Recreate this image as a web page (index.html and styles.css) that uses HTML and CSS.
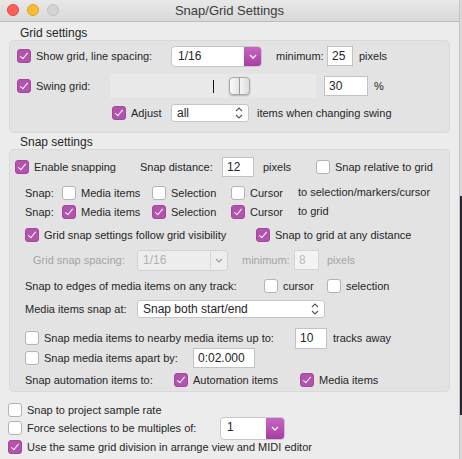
FILE: index.html
```html
<!DOCTYPE html>
<html lang="en">
<head>
  <meta charset="UTF-8" />
  <title>Snap/Grid Settings</title>
  <link rel="stylesheet" href="styles.css">
</head>
<body>
  <div class="window">
    <div class="titlebar">
      <div class="lights">
        <span class="light red"></span>
        <span class="light yellow"></span>
        <span class="light off"></span>
      </div>
      <div class="title">Snap/Grid Settings</div>
    </div>

    <div class="section-title">Grid settings</div>
    <div class="group grid-group">
      <div class="row g1">
        <label class="opt w-show"><span class="cb on"></span>Show grid, line spacing:</label>
        <div class="popup w-spacing">
          <span class="popup-text">1/16</span>
          <span class="popup-btn"><svg width="8" height="5" viewBox="0 0 8 5"><path d="M1 1 L4 4 L7 1" fill="none" stroke="#fff" stroke-width="1.3"/></svg></span>
        </div>
        <span class="lbl w-min">minimum:</span>
        <div class="field w-25">25</div>
        <span class="lbl ml6">pixels</span>
      </div>
      <div class="row g2">
        <label class="opt w-swing"><span class="cb on"></span>Swing grid:</label>
        <div class="slider">
          <span class="tick"></span>
          <span class="thumb"></span>
        </div>
        <div class="field w-30">30</div>
        <span class="lbl ml6">%</span>
      </div>
      <div class="row g3">
        <label class="opt w-adjust"><span class="cb on"></span>Adjust</label>
        <div class="select w-all">
          <span class="popup-text">all</span>
          <svg class="updown" width="8" height="12" viewBox="0 0 8 12"><path d="M1 4 L4 1 L7 4 M1 8 L4 11 L7 8" fill="none" stroke="#555" stroke-width="1.1"/></svg>
        </div>
        <span class="lbl ml8">items when changing swing</span>
      </div>
    </div>

    <div class="section-title snap-title">Snap settings</div>
    <div class="group snap-group">
      <div class="row sA">
        <label class="opt w-enable"><span class="cb on"></span>Enable snapping</label>
        <span class="lbl w-dist">Snap distance:</span>
        <div class="field w-12">12</div>
        <span class="lbl w-px">pixels</span>
        <label class="opt"><span class="cb"></span>Snap relative to grid</label>
      </div>
      <div class="row sB">
        <span class="lbl w-snap">Snap:</span>
        <label class="opt w-media"><span class="cb"></span>Media items</label>
        <label class="opt w-sel"><span class="cb"></span>Selection</label>
        <label class="opt w-cur"><span class="cb"></span>Cursor</label>
        <span class="lbl raise">to selection/markers/cursor</span>
      </div>
      <div class="row sC">
        <span class="lbl w-snap">Snap:</span>
        <label class="opt w-media"><span class="cb on"></span>Media items</label>
        <label class="opt w-sel"><span class="cb on"></span>Selection</label>
        <label class="opt w-cur"><span class="cb on"></span>Cursor</label>
        <span class="lbl raise">to grid</span>
      </div>
      <div class="row sD">
        <label class="opt w-follow"><span class="cb on"></span>Grid snap settings follow grid visibility</label>
        <label class="opt"><span class="cb on"></span>Snap to grid at any distance</label>
      </div>
      <div class="row sE disabled">
        <span class="lbl w-gss">Grid snap spacing:</span>
        <div class="select dim w-gsel">
          <span class="popup-text">1/16</span>
          <span class="dim-btn"><svg width="8" height="5" viewBox="0 0 8 5"><path d="M1 1 L4 4 L7 1" fill="none" stroke="#9a9a9a" stroke-width="1.1"/></svg></span>
        </div>
        <span class="lbl w-min2">minimum:</span>
        <div class="field dim w-8">8</div>
        <span class="lbl ml8">pixels</span>
      </div>
      <div class="row sF">
        <span class="lbl w-edges">Snap to edges of media items on any track:</span>
        <label class="opt w-cursor"><span class="cb"></span>cursor</label>
        <label class="opt"><span class="cb"></span>selection</label>
      </div>
      <div class="row sG">
        <span class="lbl w-at">Media items snap at:</span>
        <div class="select w-both">
          <span class="popup-text">Snap both start/end</span>
          <svg class="updown" width="8" height="12" viewBox="0 0 8 12"><path d="M1 4 L4 1 L7 4 M1 8 L4 11 L7 8" fill="none" stroke="#555" stroke-width="1.1"/></svg>
        </div>
      </div>
      <div class="row sH">
        <label class="opt w-nearby"><span class="cb"></span>Snap media items to nearby media items up to:</label>
        <div class="field w-10">10</div>
        <span class="lbl ml6">tracks away</span>
      </div>
      <div class="row sI">
        <label class="opt w-apart"><span class="cb"></span>Snap media items apart by:</label>
        <div class="field w-time">0:02.000</div>
      </div>
      <div class="row sJ">
        <span class="lbl w-auto">Snap automation items to:</span>
        <label class="opt w-autoitems"><span class="cb on"></span>Automation items</label>
        <label class="opt"><span class="cb on"></span>Media items</label>
      </div>
    </div>

    <div class="extra">
      <div class="row e1">
        <label class="opt"><span class="cb"></span>Snap to project sample rate</label>
      </div>
      <div class="row e2">
        <label class="opt w-force"><span class="cb"></span>Force selections to be multiples of:</label>
        <div class="popup w-mult">
          <span class="popup-text">1</span>
          <span class="popup-btn"><svg width="8" height="5" viewBox="0 0 8 5"><path d="M1 1 L4 4 L7 1" fill="none" stroke="#fff" stroke-width="1.3"/></svg></span>
        </div>
      </div>
      <div class="row e3">
        <label class="opt"><span class="cb on"></span>Use the same grid division in arrange view and MIDI editor</label>
      </div>
    </div>
  </div>
</body>
</html>
```

FILE: styles.css
```css
* {
  margin: 0;
  padding: 0;
  box-sizing: border-box;
}

body {
  width: 462px;
  height: 459px;
  overflow: hidden;
  font-family: 'Liberation Sans', Arial, sans-serif;
  font-size: 11px;
  color: #262626;
  /* desktop peeking out at the right edge */
  background: linear-gradient(to bottom, #d9d9d9 0, #d9d9d9 196px, #2b2730 196px, #2b2730 415px, #d9d9d9 415px);
}

.window {
  width: 460px;
  height: 459px;
  background: #ececec;
  border-right: 1px solid #c4c4c4;
}

/* title bar */
.titlebar {
  position: relative;
  height: 22px;
  background: linear-gradient(to bottom, #e8e8e8, #d9d9d9);
  border-bottom: 1px solid #bdbdbd;
  display: flex;
  align-items: center;
  justify-content: center;
}

.title {
  font-size: 13px;
  color: #3b3b3b;
}

.lights {
  position: absolute;
  left: 7px;
  top: 4px;
  display: flex;
  gap: 8px;
}

.light {
  width: 12px;
  height: 12px;
  border-radius: 50%;
}

.light.red {
  background: #fc5f57;
  border: 1px solid #e1463f;
}

.light.yellow {
  background: #fdbc2e;
  border: 1px solid #dfa023;
}

.light.off {
  background: #d3d3d3;
  border: 1px solid #c2c2c2;
}

/* groups */
.section-title {
  margin: 4px 0 0 20px;
  height: 14px;
  line-height: 14px;
  font-size: 12px;
}

.snap-title {
  margin-top: 2px;
}

.group {
  margin-left: 9px;
  width: 441px;
  background: #e3e3e3;
  border: 1px solid #d9d9d9;
  border-radius: 5px;
}

.grid-group {
  padding-bottom: 10px;
}

.snap-group {
  padding-bottom: 2px;
}

.row {
  height: 18px;
  display: flex;
  align-items: center;
  white-space: nowrap;
}

.g1 { margin-top: 6px; padding-left: 7px; }
.g2 { margin-top: 12px; padding-left: 7px; }
.g3 { margin-top: 9px; padding-left: 102px; }

.sA { margin-top: 8px; padding-left: 5px; }
.sB { margin-top: 8px; padding-left: 15px; }
.sC { margin-top: 1px; padding-left: 15px; }
.sD { margin-top: 5px; padding-left: 15px; }
.sE { margin-top: 7px; padding-left: 23px; }
.sF { margin-top: 8px; padding-left: 15px; }
.sG { margin-top: 5px; padding-left: 15px; }
.sH { margin-top: 11px; padding-left: 15px; }
.sI { margin-top: 2px; padding-left: 15px; }
.sJ { margin-top: 4px; padding-left: 15px; }

.extra {
  padding-left: 8px;
}

.e1 { margin-top: 9px; }
.e2 { margin-top: 0; }
.e3 { margin-top: 1px; }

/* checkboxes */
.opt {
  display: flex;
  align-items: center;
  flex-shrink: 0;
}

.cb {
  position: relative;
  width: 14px;
  height: 14px;
  margin-right: 5px;
  border-radius: 3px;
  background: #fff;
  border: 1px solid #b3b3b3;
  flex-shrink: 0;
}

.cb.on {
  background: #b253ad;
  border-color: #a4469f;
}

.cb.on::after {
  content: "";
  position: absolute;
  left: 4px;
  top: 1px;
  width: 3px;
  height: 7px;
  border-right: 1.5px solid #fff;
  border-bottom: 1.5px solid #fff;
  transform: rotate(40deg);
}

.lbl {
  flex-shrink: 0;
}

.raise {
  position: relative;
  top: -1px;
}

.ml6 { margin-left: 6px; }
.ml8 { margin-left: 8px; }

.disabled {
  color: #a3a3a3;
}

/* text fields */
.field {
  height: 20px;
  line-height: 18px;
  padding-left: 4px;
  background: #fff;
  border: 1px solid #c2c2c2;
  font-size: 12px;
  flex-shrink: 0;
}

.field.dim {
  background: #f3f3f3;
  color: #bcbcbc;
  border-color: #d4d4d4;
}

/* popups */
.popup {
  height: 21px;
  display: flex;
  background: #fff;
  border: 1px solid #c6c6c6;
  border-radius: 4px;
  overflow: hidden;
  flex-shrink: 0;
}

.popup-text {
  flex: 1;
  padding-left: 6px;
  line-height: 19px;
  font-size: 12px;
}

.popup-btn {
  width: 17px;
  display: flex;
  align-items: center;
  justify-content: center;
  background: linear-gradient(to bottom, #c865c4, #a83ea3);
}

.select {
  height: 18px;
  display: flex;
  align-items: center;
  background: #fff;
  border: 1px solid #c6c6c6;
  border-radius: 3px;
  padding-right: 5px;
  flex-shrink: 0;
}

.select .popup-text {
  padding-left: 5px;
  line-height: 16px;
}

.select.dim {
  height: 21px;
  padding-right: 0;
  background: #ededed;
  border-color: #d2d2d2;
  color: #b2b2b2;
}

.dim-btn {
  width: 17px;
  height: 100%;
  display: flex;
  align-items: center;
  justify-content: center;
  border-left: 1px solid #d8d8d8;
}

/* swing slider */
.slider {
  position: relative;
  height: 24px;
  background: #e9e9e9;
  flex-shrink: 0;
  width: 206px;
}

.tick {
  position: absolute;
  left: 103px;
  top: 6px;
  width: 1px;
  height: 13px;
  background: #111;
}

.thumb {
  position: absolute;
  left: 119px;
  top: 3px;
  width: 21px;
  height: 18px;
  border-radius: 4px;
  border: 1px solid #a9a9a9;
  background: linear-gradient(to right, #fafafa 0, #e4e4e4 48%, #9a9a9a 48%, #9a9a9a 55%, #f3f3f3 55%, #dcdcdc);
  box-shadow: 0 1px 2px rgba(0, 0, 0, 0.25);
}

/* column widths */
.w-show { width: 154px; }
.w-spacing { width: 91px; }
.w-min { width: 51px; margin-left: 14px; }
.w-25 { width: 26px; }
.w-swing { width: 93px; }
.w-30 { width: 44px; margin-left: 8px; }
.w-adjust { width: 59px; }
.w-all { width: 78px; }

.w-enable { width: 125px; }
.w-dist { width: 82px; }
.w-12 { width: 32px; }
.w-px { width: 53px; margin-left: 9px; }
.w-snap { width: 37px; }
.w-media { width: 90px; }
.w-sel { width: 79px; }
.w-cur { width: 67px; }
.w-follow { width: 231px; }
.w-gss { width: 104px; }
.w-gsel { width: 91px; }
.w-min2 { width: 52px; margin-left: 14px; }
.w-8 { width: 25px; }
.w-edges { width: 239px; }
.w-cursor { width: 63px; }
.w-at { width: 112px; }
.w-both { width: 188px; }
.w-nearby { width: 270px; }
.w-10 { width: 32px; height: 21px; }
.w-apart { width: 168px; }
.w-time { width: 62px; }
.w-auto { width: 149px; }
.w-autoitems { width: 126px; }

.w-force { width: 212px; }
.w-mult { width: 65px; height: 23px; }
.w-mult .popup-btn { width: 18px; }
```
